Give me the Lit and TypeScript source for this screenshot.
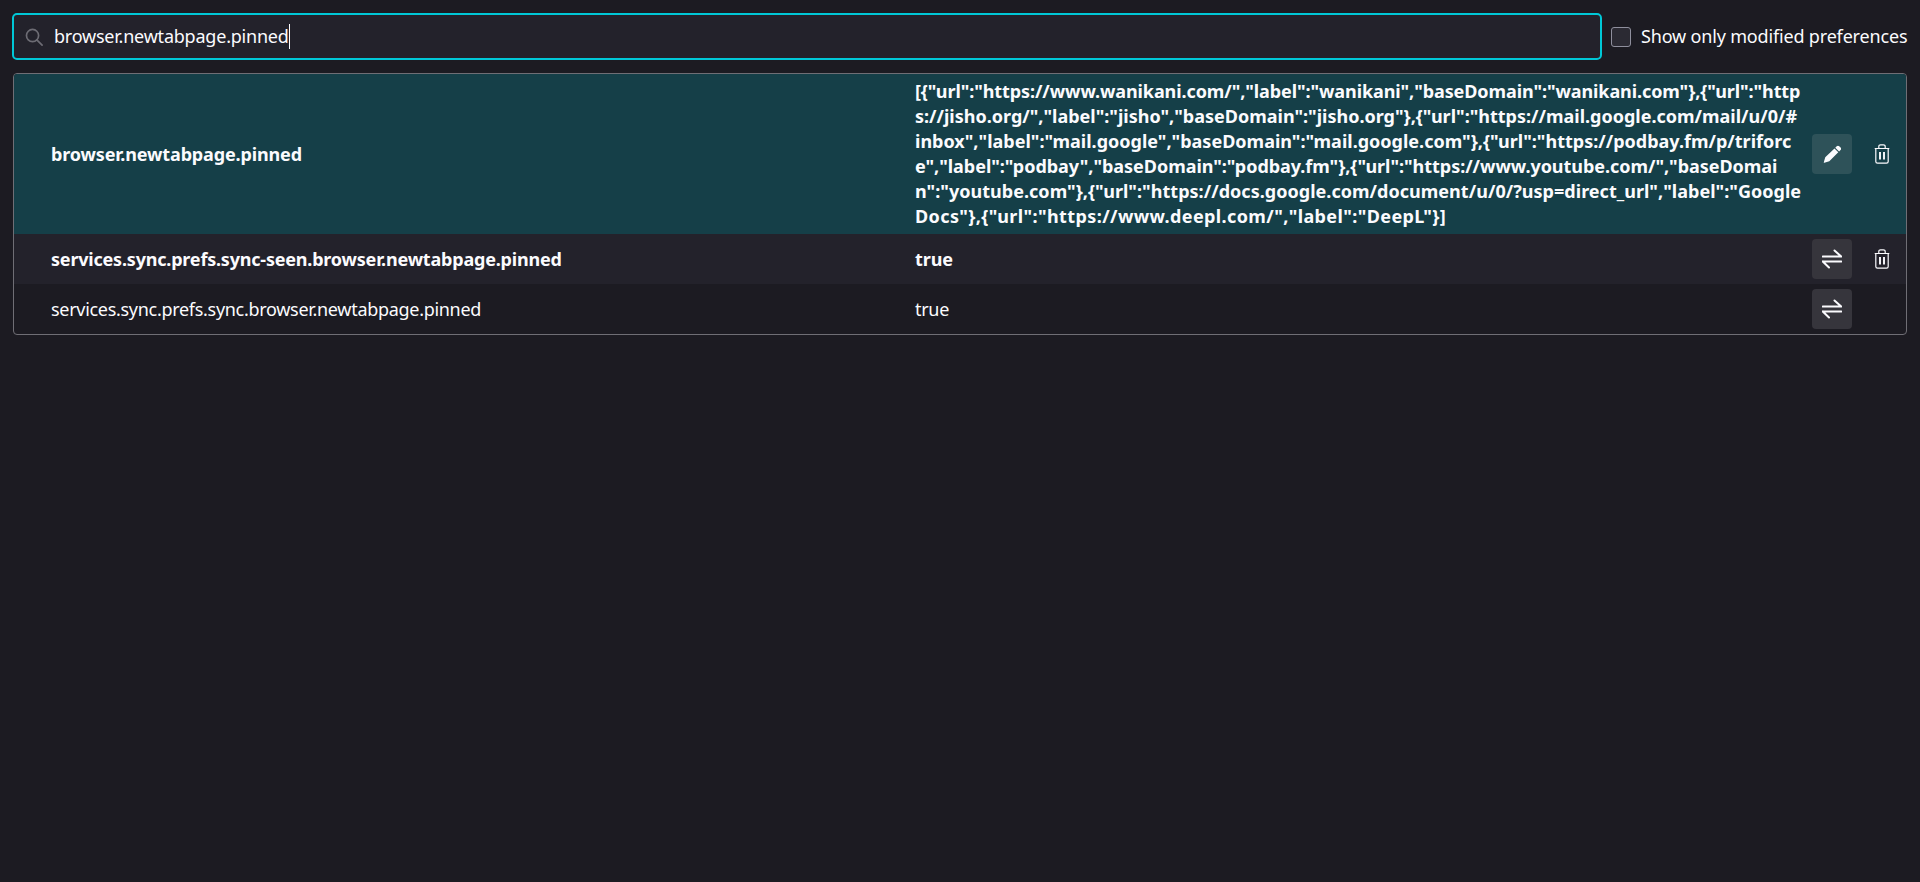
import { LitElement, html, css, svg } from "lit";
import { customElement } from "lit/decorators.js";
import { styleMap } from "lit/directives/style-map.js";

const valueLines: [string, number][] = [
  ['[{"url":"https://www.wanikani.com/","label":"wanikani","baseDomain":"wanikani.com"},{"url":"http', -0.09],
  ['s://jisho.org/","label":"jisho","baseDomain":"jisho.org"},{"url":"https://mail.google.com/mail/u/0/#', -0.005],
  ['inbox","label":"mail.google","baseDomain":"mail.google.com"},{"url":"https://podbay.fm/p/triforc', 0],
  ['e","label":"podbay","baseDomain":"podbay.fm"},{"url":"https://www.youtube.com/","baseDomai', -0.04],
  ['n":"youtube.com"},{"url":"https://docs.google.com/document/u/0/?usp=direct_url","label":"Google', 0.025],
  ['Docs"},{"url":"https://www.deepl.com/","label":"DeepL"}]', 0.39],
];

const searchIcon = svg`<path d="M10.5 10.5 15.2 15.2" stroke-linecap="round"/><circle cx="6.7" cy="6.7" r="5.4"/>`;
const editIcon = svg`<path fill="currentColor" stroke="none" d="M12.2 1.1a1.6 1.6 0 0 1 2.2 0l1.2 1.2a1.6 1.6 0 0 1 0 2.2l-1.3 1.3-3.4-3.4zM10.2 3.1l3.4 3.4-8 8-4.4 1.3a.4.4 0 0 1-.5-.5l1.3-4.4z"/>`;
const toggleIcon = svg`<path stroke-linecap="round" stroke-linejoin="round" d="M.8 7.5h18.4M12.5 1.5l6.7 6M.8 12.5h18.4M.8 12.5l6.2 6"/>`;
const trashIcon = svg`<path stroke-linejoin="round" d="M.7 4.5h14.6M1.8 4.5v13a1.7 1.7 0 0 0 1.7 1.7h9a1.7 1.7 0 0 0 1.7-1.7v-13M4.8 4.5V2.5A1.7 1.7 0 0 1 6.5.8h3a1.7 1.7 0 0 1 1.7 1.7v2"/><path stroke-width="1.9" d="M6 8v7.5M10 8v7.5"/>`;

@customElement("app-root")
export class AppRoot extends LitElement {
  static styles = css`
    :host {
      display: block;
      min-height: 882px;
      background: #1c1b22;
      color: #fbfbfe;
      font-family: "Noto Sans", "Open Sans", sans-serif;
      font-size: 18px;
      line-height: 25px;
      box-sizing: border-box;
      padding: 13px 13px 0 12px;
    }
    .top {
      display: flex;
      align-items: center;
      gap: 9px;
      height: 47px;
    }
    .search {
      flex: none;
      width: 1590px;
      height: 47px;
      box-sizing: border-box;
      border: 2px solid #00c8d7;
      border-radius: 5px;
      background: #23222b;
      display: flex;
      align-items: center;
      padding-left: 11px;
      gap: 11px;
    }
    .search svg {
      width: 18px;
      height: 18px;
      fill: none;
      stroke: #6d6c74;
      stroke-width: 1.5;
      flex: none;
    }
    .query {
      display: inline-block;
      border-right: 1px solid #fbfbfe;
      letter-spacing: -0.22px;
    }
    .check {
      display: flex;
      align-items: center;
      gap: 10px;
      white-space: nowrap;
    }
    .box {
      width: 20px;
      height: 20px;
      box-sizing: border-box;
      border: 1px solid #8f8f9d;
      border-radius: 3px;
      background: #2b2a33;
      flex: none;
    }
    .check span {
      letter-spacing: -0.17px;
    }
    .table {
      margin: 13px 0 0 1px;
      border: 1px solid #6f6e75;
      border-radius: 4px;
      overflow: hidden;
      display: grid;
      grid-template-columns: 864px 1fr 40px 54px;
    }
    .row {
      display: grid;
      grid-template-columns: subgrid;
      grid-column: 1 / -1;
      align-items: center;
      padding: 5px 0;
    }
    .row.sel { background: #153f48; }
    .row.alt { background: #23222b; }
    .row.mod { font-weight: 700; }
    .name {
      padding-left: 37px;
      white-space: nowrap;
      letter-spacing: -0.3px;
    }
    .row.sel .name { letter-spacing: -0.14px; }
    .row.alt .name { letter-spacing: -0.2px; }
    .value {
      padding-left: 37px;
      white-space: nowrap;
      letter-spacing: -0.3px;
    }
    .row.mod .value { letter-spacing: -0.09px; }
    .line { display: block; }
    .btn {
      width: 40px;
      height: 40px;
      border-radius: 4px;
      background: #36353c;
      display: flex;
      align-items: center;
      justify-content: center;
      color: #fbfbfe;
    }
    .row.sel .btn { background: #2e5259; }
    .btn svg, .del svg {
      fill: none;
      stroke: currentColor;
    }
    .edit svg { width: 18px; height: 18px; }
    .tog svg { width: 20px; height: 20px; stroke-width: 2; }
    .del {
      display: flex;
      justify-content: center;
      padding-left: 6px;
    }
    .del svg { width: 16px; height: 20px; stroke-width: 1.2; }
  `;

  private del() {
    return html`<div class="del"><svg viewBox="0 0 16 20">${trashIcon}</svg></div>`;
  }

  render() {
    return html`
      <div class="top">
        <div class="search">
          <svg viewBox="0 0 16 16">${searchIcon}</svg>
          <span class="query">browser.newtabpage.pinned</span>
        </div>
        <label class="check"><div class="box"></div><span>Show only modified preferences</span></label>
      </div>
      <div class="table">
        <div class="row sel mod">
          <div class="name">browser.newtabpage.pinned</div>
          <div class="value">${valueLines.map(
            ([l, s]) => html`<span class="line" style=${styleMap({ letterSpacing: `${s}px` })}>${l}</span>`
          )}</div>
          <div class="btn edit"><svg viewBox="0 0 16 16">${editIcon}</svg></div>
          ${this.del()}
        </div>
        <div class="row alt mod">
          <div class="name">services.sync.prefs.sync-seen.browser.newtabpage.pinned</div>
          <div class="value">true</div>
          <div class="btn tog"><svg viewBox="0 0 20 20">${toggleIcon}</svg></div>
          ${this.del()}
        </div>
        <div class="row">
          <div class="name">services.sync.prefs.sync.browser.newtabpage.pinned</div>
          <div class="value">true</div>
          <div class="btn tog"><svg viewBox="0 0 20 20">${toggleIcon}</svg></div>
          <div></div>
        </div>
      </div>
    `;
  }
}
